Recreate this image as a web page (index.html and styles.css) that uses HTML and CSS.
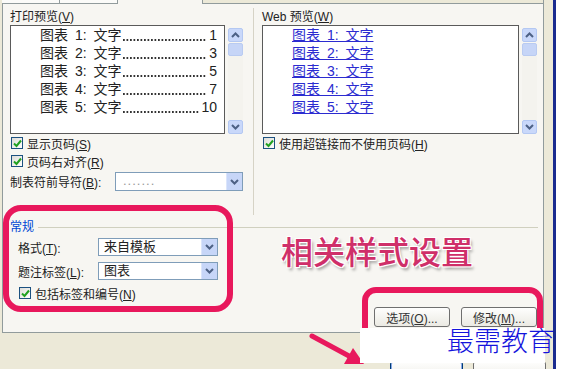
FILE: index.html
```html
<!DOCTYPE html>
<html lang="zh-CN">
<head>
    <meta charset="UTF-8">
    <title>图表目录</title>
    <link rel="stylesheet" href="styles.css">
</head>
<body>
<div class="dialog">
    <div class="tabs">
        <div class="tab t1"></div>
        <div class="tab t2"></div>
        <div class="tab t3 active"></div>
        <div class="tab rest"></div>
    </div>

    <div class="panel">
        <div class="previews">
            <section class="col">
                <div class="label">打印预览(<span class="key">V</span>)</div>
                <div class="preview-row">
                    <div class="listbox">
                        <div class="item"><span class="cap">图表 1: 文字</span><span class="leader"></span><span class="pg">1</span></div>
                        <div class="item"><span class="cap">图表 2: 文字</span><span class="leader"></span><span class="pg">3</span></div>
                        <div class="item"><span class="cap">图表 3: 文字</span><span class="leader"></span><span class="pg">5</span></div>
                        <div class="item"><span class="cap">图表 4: 文字</span><span class="leader"></span><span class="pg">7</span></div>
                        <div class="item"><span class="cap">图表 5: 文字</span><span class="leader"></span><span class="pg">10</span></div>
                    </div>
                    <div class="scroll">
                        <div class="sbtn"><svg width="9" height="6" viewBox="0 0 9 6"><polyline points="1,5 4.5,1.5 8,5" fill="none" stroke="#4d6185" stroke-width="2"/></svg></div>
                        <div class="thumb"></div>
                        <div class="track"></div>
                        <div class="sbtn"><svg width="9" height="6" viewBox="0 0 9 6"><polyline points="1,1 4.5,4.5 8,1" fill="none" stroke="#4d6185" stroke-width="2"/></svg></div>
                    </div>
                </div>
                <div class="check-row">
                    <span class="cb"><svg width="9" height="9" viewBox="0 0 9 9"><polyline points="1,4.5 3.5,7 8,1.5" fill="none" stroke="#21a121" stroke-width="2"/></svg></span>
                    <span>显示页码(<span class="key">S</span>)</span>
                </div>
                <div class="check-row">
                    <span class="cb"><svg width="9" height="9" viewBox="0 0 9 9"><polyline points="1,4.5 3.5,7 8,1.5" fill="none" stroke="#21a121" stroke-width="2"/></svg></span>
                    <span>页码右对齐(<span class="key">R</span>)</span>
                </div>
                <div class="field-row leader-row">
                    <span class="field-label">制表符前导符(<span class="key">B</span>):</span>
                    <div class="combo wide">
                        <span class="combo-text dots">.......</span>
                        <span class="combo-btn"><svg width="9" height="6" viewBox="0 0 9 6"><polyline points="1,1 4.5,4.5 8,1" fill="none" stroke="#4d6185" stroke-width="2"/></svg></span>
                    </div>
                </div>
            </section>

            <section class="col right">
                <div class="label">Web 预览(<span class="key">W</span>)</div>
                <div class="preview-row">
                    <div class="listbox web">
                        <div class="item"><span class="link">图表 1: 文字</span></div>
                        <div class="item"><span class="link">图表 2: 文字</span></div>
                        <div class="item"><span class="link">图表 3: 文字</span></div>
                        <div class="item"><span class="link">图表 4: 文字</span></div>
                        <div class="item"><span class="link">图表 5: 文字</span></div>
                    </div>
                    <div class="scroll">
                        <div class="sbtn"><svg width="9" height="6" viewBox="0 0 9 6"><polyline points="1,5 4.5,1.5 8,5" fill="none" stroke="#4d6185" stroke-width="2"/></svg></div>
                        <div class="thumb"></div>
                        <div class="track"></div>
                        <div class="sbtn"><svg width="9" height="6" viewBox="0 0 9 6"><polyline points="1,1 4.5,4.5 8,1" fill="none" stroke="#4d6185" stroke-width="2"/></svg></div>
                    </div>
                </div>
                <div class="check-row">
                    <span class="cb"><svg width="9" height="9" viewBox="0 0 9 9"><polyline points="1,4.5 3.5,7 8,1.5" fill="none" stroke="#21a121" stroke-width="2"/></svg></span>
                    <span>使用超链接而不使用页码(<span class="key">H</span>)</span>
                </div>
            </section>
        </div>

        <div class="group-title"><span>常规</span></div>
        <div class="general">
            <div class="field-row">
                <span class="field-label short">格式(<span class="key">T</span>):</span>
                <div class="combo">
                    <span class="combo-text">来自模板</span>
                    <span class="combo-btn"><svg width="9" height="6" viewBox="0 0 9 6"><polyline points="1,1 4.5,4.5 8,1" fill="none" stroke="#4d6185" stroke-width="2"/></svg></span>
                </div>
            </div>
            <div class="field-row">
                <span class="field-label short">题注标签(<span class="key">L</span>):</span>
                <div class="combo">
                    <span class="combo-text">图表</span>
                    <span class="combo-btn"><svg width="9" height="6" viewBox="0 0 9 6"><polyline points="1,1 4.5,4.5 8,1" fill="none" stroke="#4d6185" stroke-width="2"/></svg></span>
                </div>
            </div>
            <div class="check-row">
                <span class="cb"><svg width="9" height="9" viewBox="0 0 9 9"><polyline points="1,4.5 3.5,7 8,1.5" fill="none" stroke="#21a121" stroke-width="2"/></svg></span>
                <span>包括标签和编号(<span class="key">N</span>)</span>
            </div>
        </div>

        <div class="actions">
            <button class="btn">选项(<span class="key">O</span>)...</button>
            <button class="btn">修改(<span class="key">M</span>)...</button>
        </div>
    </div>

    <div class="footer">
        <button class="btn big default"></button>
        <button class="btn big"></button>
    </div>

    <!-- annotations drawn over the screenshot -->
    <div class="mark mark-general"></div>
    <div class="mark mark-buttons"></div>
    <div class="note">相关样式设置</div>
    <svg class="arrow" width="70" height="40" viewBox="300 330 70 40">
        <line x1="312" y1="336" x2="349" y2="356" stroke="#e8185c" stroke-width="5" stroke-linecap="round"/>
        <polygon points="344,364 353,348 364,364" fill="#e8185c"/>
    </svg>
    <div class="stamp"></div>
    <div class="stamp-text">最需教育</div>
</div>
</body>
</html>
```

FILE: styles.css
```css
:root {
    --panel-bg: #f7f6f2;
    --dialog-bg: #ece9d8;
    --edge: #919b9c;
    --xp-border: #7f9db9;
    --pink: #e8185c;
    --font-family: "Liberation Sans", "Noto Sans CJK SC", sans-serif;
}
body {
    margin: 0;
    background: #fff;
    font-family: var(--font-family);
    font-size: 12px;
    color: #222;
    overflow: hidden;
}
.dialog {
    position: relative;
    width: 553px;
    height: 369px;
    background: var(--dialog-bg);
    border-right: 3px solid #1a2b8f;
}

/* tab strip, only its bottom edge is visible */
.tabs {
    display: flex;
    height: 4px;
    padding-left: 2px;
}
.tab {
    box-sizing: border-box;
    height: 4px;
    border-bottom: 1px solid var(--edge);
    border-right: 1px solid var(--edge);
    background: #fbfbf9;
}
.t1 { width: 58px; }
.t2 { width: 58px; }
.t3 { width: 85px; }
.tab.active {
    border-bottom: none;
    background: var(--panel-bg);
}
.rest {
    flex: none;
    width: 341px;
    border-right: 1px solid var(--edge);
    background: var(--dialog-bg);
}

.panel {
    box-sizing: border-box;
    margin-left: 2px;
    width: 542px;
    height: 329px;
    padding: 4px 0 0 7px;
    background: var(--panel-bg);
    border: 1px solid var(--edge);
    border-top: none;
}

.previews {
    display: grid;
    grid-template-columns: 233px 284px;
    column-gap: 10px;
    height: 207px;
}
.col {
    padding-top: 2px;
}
.col.right {
    border-left: 1px solid #d6d3c6;
    padding-left: 8px;
}
.label {
    line-height: 14px;
    height: 14px;
}
.key {
    text-decoration: underline;
}

.preview-row {
    display: flex;
    gap: 3px;
    margin-top: 1px;
}
.listbox {
    box-sizing: border-box;
    width: 215px;
    height: 109px;
    background: #fff;
    border: 1px solid #5a5a5a;
    padding: 0 7px 0 29px;
    font-size: 14px;
    color: #222;
}
.listbox.web {
    width: 257px;
    padding-left: 29px;
}
.item {
    display: flex;
    height: 18px;
    line-height: 18px;
    white-space: nowrap;
}
.cap {
    flex: none;
    white-space: pre;
    word-spacing: 3px;
}
/* dotted tab leader between caption and page number */
.leader {
    flex: 1;
    min-width: 0;
    margin: 0 2px 0 2px;
    background-image: linear-gradient(90deg, #333 1.5px, transparent 1.5px);
    background-size: 3.5px 1.5px;
    background-repeat: repeat-x;
    background-position: 0 13px;
}
.pg {
    flex: none;
}
.link {
    white-space: pre;
    word-spacing: 3px;
    color: #2b2bd0;
    text-decoration: underline;
}

.scroll {
    display: flex;
    flex-direction: column;
    width: 15px;
    height: 106px;
    margin-top: 3px;
}
.sbtn {
    box-sizing: border-box;
    height: 14px;
    display: flex;
    align-items: center;
    justify-content: center;
    background: #c9d8fa;
    border: 1px solid #b4c8f2;
    border-radius: 2px;
}
.thumb {
    box-sizing: border-box;
    height: 13px;
    margin-top: 1px;
    background: #c6d5f7;
    border: 1px solid #b9cbf1;
    border-radius: 2px;
}
.track {
    flex: 1;
    background: #f4f3ee;
}

.check-row {
    display: flex;
    align-items: center;
    gap: 4px;
    height: 18px;
}
.previews .check-row:first-of-type {
    margin-top: 2px;
}
.cb {
    box-sizing: border-box;
    width: 12px;
    height: 12px;
    margin-left: 1px;
    display: flex;
    align-items: center;
    justify-content: center;
    border: 1px solid #1c5180;
    background: linear-gradient(135deg, #dcdcd7, #fff);
}

.field-row {
    display: flex;
    align-items: center;
}
.leader-row {
    margin-top: 2px;
}
.field-label {
    width: 105px;
}
.field-label.short {
    width: 80px;
}
.combo {
    box-sizing: border-box;
    display: flex;
    width: 120px;
    height: 18px;
    background: #fff;
    border: 1px solid var(--xp-border);
}
.combo.wide {
    width: 128px;
    height: 19px;
}
.combo-text {
    flex: 1;
    padding-left: 5px;
    line-height: 16px;
    font-size: 13px;
}
.combo-text.dots {
    color: #999;
    padding-left: 7px;
    letter-spacing: 1px;
}
.combo-btn {
    width: 15px;
    display: flex;
    align-items: center;
    justify-content: center;
    background: #c7d6f8;
    border-left: 1px solid #dbe5fb;
}

.group-title {
    display: flex;
    align-items: center;
    gap: 4px;
    margin-top: 5px;
    line-height: 14px;
    color: #0046d5;
}
.group-title::after {
    content: "";
    flex: none;
    width: 500px;
    height: 1px;
    background: #d0d0bf;
}
.general {
    padding-left: 8px;
    padding-top: 4px;
    display: flex;
    flex-direction: column;
    gap: 6px;
}
.general .check-row {
    height: 16px;
    margin-top: -1px;
}

.actions {
    display: flex;
    justify-content: flex-end;
    gap: 11px;
    width: 527px;
    margin-top: 6px;
}
.btn {
    box-sizing: border-box;
    width: 76px;
    height: 20px;
    padding: 0;
    font-family: var(--font-family);
    font-size: 12px;
    color: #333;
    background: linear-gradient(#fefefd, #ebeae3);
    border: 1px solid #6f6f6f;
    border-radius: 3px;
}

.footer {
    display: flex;
    gap: 10px;
    padding-left: 390px;
    margin-top: 28px;
}
.btn.big {
    width: 73px;
    height: 22px;
}
.btn.default {
    border-color: #003c74;
    box-shadow: inset 0 0 0 1px #8aa8e8;
}

/* annotation overlays */
.mark {
    position: absolute;
    box-sizing: border-box;
    border: 6px solid var(--pink);
}
.mark-general {
    left: 3px;
    top: 205px;
    width: 230px;
    height: 107px;
    border-radius: 18px;
}
.mark-buttons {
    left: 362px;
    top: 287px;
    width: 181px;
    height: 60px;
    border-radius: 14px;
}
.note {
    position: absolute;
    left: 281px;
    top: 230px;
    font-family: "Noto Sans CJK SC", sans-serif;
    font-size: 32px;
    font-weight: 500;
    line-height: 40px;
    color: #cf2f69;
    text-shadow: 1px 1px 0 #fff, -1px -1px 0 #fff, 1px -1px 0 #fff, -1px 1px 0 #fff, 2px 3px 3px rgba(0, 0, 0, 0.35);
}
.arrow {
    position: absolute;
    left: 300px;
    top: 330px;
}
.stamp {
    position: absolute;
    left: 360px;
    top: 328px;
    width: 185px;
    height: 35px;
    background: #fff;
}
.stamp-text {
    position: absolute;
    left: 447px;
    top: 326px;
    font-family: "Noto Sans CJK SC", sans-serif;
    font-size: 27px;
    font-weight: 300;
    line-height: 27px;
    color: #1414dc;
    white-space: nowrap;
}
```
